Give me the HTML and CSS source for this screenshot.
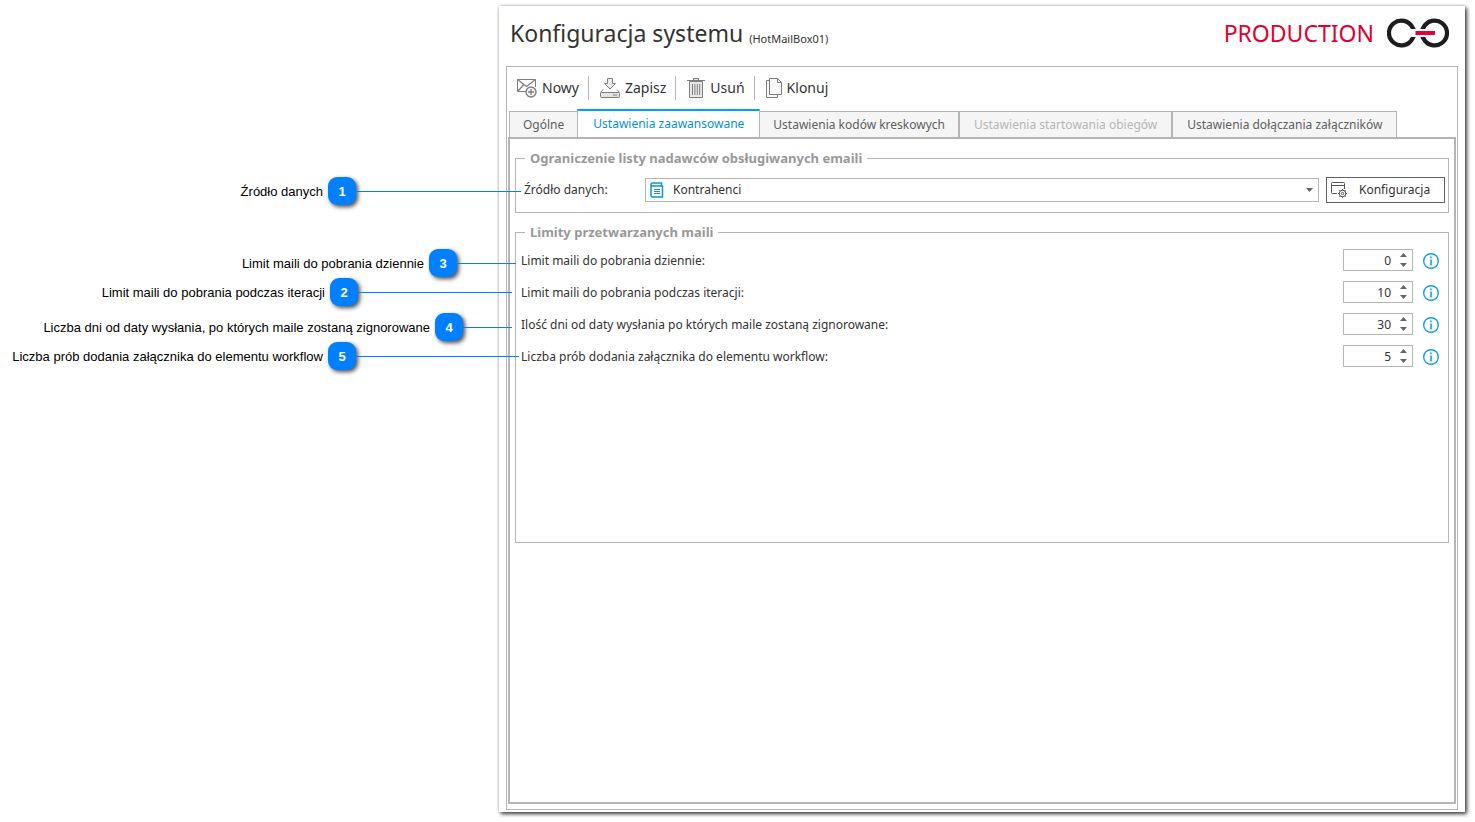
FILE: index.html
```html
<!DOCTYPE html>
<html lang="pl">
<head>
<meta charset="utf-8">
<title>Konfiguracja systemu</title>
<link rel="stylesheet" href="styles.css">
</head>
<body>
<main class="window">
  <header class="header">
    <h1 class="title">Konfiguracja systemu</h1>
    <span class="subtitle">(HotMailBox01)</span>
    <span class="environment">PRODUCTION</span>
    <svg class="logo" viewBox="0 0 62 30" aria-hidden="true">
      <g fill="none" stroke="#1d1d1f" stroke-width="4.200">
        <path d="M25.500 9.500A12.400 12.400 0 1 0 25.500 20.500"/>
        <path d="M36.500 9.500A12.400 12.400 0 1 1 36.500 20.500"/>
      </g>
      <path fill="#1d1d1f" d="M23 8.500h4.500l1.200 2.500H24zM24 19h4.700l-1.200 2.500H23zM34.500 8.500H39L38 11h-4.700zM33.300 19H38l1 2.500h-4.500z"/>
      <path fill="#e4003a" d="M28.500 13H48v4H28.500z"/>
    </svg>
  </header>
  <section class="frame">
    <div class="toolbar">
      <button class="tool" type="button">
        <svg class="tool-icon" viewBox="0 0 20 20" aria-hidden="true"><g fill="none" stroke="#7d7d7d"><path d="M9 13.500H.5v-12h18V9"/><path d="M.5 1.500l9 7 9-7M.5 13.500l6-6.500" stroke-width="1.300"/><circle cx="14" cy="14" r="5" fill="#f3f3f3" stroke-width="1.400"/><path d="M14 11v6M11 14h6" stroke-width="1.300"/></g></svg>
        Nowy
      </button>
      <button class="tool" type="button">
        <svg class="tool-icon" viewBox="0 0 20 20" aria-hidden="true"><g fill="#ececec" stroke="#7d7d7d"><path d="M7.500.5h5v5h3L10 11 4.500 5.500h3z"/><path d="M3 11.500L.5 14.500M17 11.500l2.500 3" fill="none"/><rect x=".5" y="14.500" width="19" height="5" rx="1" fill="#e2e2e2"/><path d="M13 17h4"/></g></svg>
        Zapisz
      </button>
      <button class="tool" type="button">
        <svg class="tool-icon tool-icon-bin" viewBox="0 0 18 20" aria-hidden="true"><g fill="#e9e9e9" stroke="#7d7d7d"><path d="M2.500 3.500h13v16h-13z"/><path d="M0 2.500h18M6.500 2.500v-2h5v2M5.500 6v11M7.900 6v11M10.300 6v11M12.700 6v11"/></g></svg>
        Usuń
      </button>
      <button class="tool" type="button">
        <svg class="tool-icon tool-icon-copy" viewBox="0 0 16 20" aria-hidden="true"><g fill="#f8f8f8" stroke="#7d7d7d"><path d="M.5 2.500h11v17H.5z"/><path d="M3.500.5h8l4 4v12h-12z"/><path d="M11.500.5v4h4" fill="none"/></g></svg>
        Klonuj
      </button>
    </div>
    <div class="tabs" role="tablist">
      <button class="tab" type="button" role="tab">Ogólne</button>
      <button class="tab tab-active" type="button" role="tab" aria-selected="true">Ustawienia zaawansowane</button>
      <button class="tab" type="button" role="tab">Ustawienia kodów kreskowych</button>
      <button class="tab tab-wide" type="button" role="tab" disabled>Ustawienia startowania obiegów</button>
      <button class="tab tab-wide" type="button" role="tab">Ustawienia dołączania załączników</button>
    </div>
    <div class="pane" role="tabpanel">
      <fieldset class="group">
        <legend class="legend">Ograniczenie listy nadawców obsługiwanych emaili</legend>
        <div class="source">
          <label class="source-label" for="source">Źródło danych:</label>
          <div class="picker">
            <svg class="picker-icon" viewBox="0 0 14 16" aria-hidden="true"><g fill="none" stroke="#0e95d8" stroke-width="1.500"><path d="M1 2.500V13.500Q1 15 2.500 15H12.500V4H2.500Q1 4 1 2.500Q1 1 2.500 1H11.500V4"/><path d="M4 7.500h6M4 9.500h6M4 11.500h6" stroke-width="1"/></g></svg>
            <select class="select" id="source"><option>Kontrahenci</option></select>
            <svg class="picker-arrow" viewBox="0 0 7 4" aria-hidden="true"><path fill="#666" d="M0 0h7L3.500 4z"/></svg>
          </div>
          <button class="configure" type="button">
            <svg class="configure-icon" viewBox="0 0 17 16" aria-hidden="true"><g fill="none" stroke="#555"><path d="M6 11.500H1.500q-1 0-1-1v-9q0-1 1-1h11q1 0 1 1V7M.5 3.500h13"/><circle cx="11.500" cy="11.500" r="3.300"/><circle cx="11.500" cy="11.500" r="1.200"/><path d="M11.500 7v1.500M11.500 14.500V16M7 11.500h1.500M14.500 11.500H16M8.300 8.300l1 1M13.700 13.700l1 1M14.700 8.300l-1 1M8.300 14.700l1-1"/></g></svg>
            <span>Konfiguracja</span>
          </button>
        </div>
      </fieldset>
      <fieldset class="group group-limits">
        <legend class="legend">Limity przetwarzanych maili</legend>
        <div class="limit">
          <label class="limit-label" for="daily">Limit maili do pobrania dziennie:</label>
          <div class="spinner"><input class="number" id="daily" type="number" value="0"><svg class="spin" viewBox="0 0 7 14" aria-hidden="true"><path fill="#666" d="M0 4h7L3.500 0zM0 10h7l-3.500 4z"/></svg></div>
          <button class="info" type="button" aria-label="Informacja"><svg class="info-icon" viewBox="0 0 16 16" aria-hidden="true"><circle cx="8" cy="8" r="7.300" fill="none" stroke="#119fe4" stroke-width="1.400"/><path fill="#119fe4" d="M7.200 3.500h1.600v1.700H7.200zM7.200 6.500h1.600v6H7.200z"/></svg></button>
        </div>
        <div class="limit">
          <label class="limit-label" for="iteration">Limit maili do pobrania podczas iteracji:</label>
          <div class="spinner"><input class="number" id="iteration" type="number" value="10"><svg class="spin" viewBox="0 0 7 14" aria-hidden="true"><path fill="#666" d="M0 4h7L3.500 0zM0 10h7l-3.500 4z"/></svg></div>
          <button class="info" type="button" aria-label="Informacja"><svg class="info-icon" viewBox="0 0 16 16" aria-hidden="true"><circle cx="8" cy="8" r="7.300" fill="none" stroke="#119fe4" stroke-width="1.400"/><path fill="#119fe4" d="M7.200 3.500h1.600v1.700H7.200zM7.200 6.500h1.600v6H7.200z"/></svg></button>
        </div>
        <div class="limit">
          <label class="limit-label" for="days">Ilość dni od daty wysłania po których maile zostaną zignorowane:</label>
          <div class="spinner"><input class="number" id="days" type="number" value="30"><svg class="spin" viewBox="0 0 7 14" aria-hidden="true"><path fill="#666" d="M0 4h7L3.500 0zM0 10h7l-3.500 4z"/></svg></div>
          <button class="info" type="button" aria-label="Informacja"><svg class="info-icon" viewBox="0 0 16 16" aria-hidden="true"><circle cx="8" cy="8" r="7.300" fill="none" stroke="#119fe4" stroke-width="1.400"/><path fill="#119fe4" d="M7.200 3.500h1.600v1.700H7.200zM7.200 6.500h1.600v6H7.200z"/></svg></button>
        </div>
        <div class="limit">
          <label class="limit-label" for="attempts">Liczba prób dodania załącznika do elementu workflow:</label>
          <div class="spinner"><input class="number" id="attempts" type="number" value="5"><svg class="spin" viewBox="0 0 7 14" aria-hidden="true"><path fill="#666" d="M0 4h7L3.500 0zM0 10h7l-3.500 4z"/></svg></div>
          <button class="info" type="button" aria-label="Informacja"><svg class="info-icon" viewBox="0 0 16 16" aria-hidden="true"><circle cx="8" cy="8" r="7.300" fill="none" stroke="#119fe4" stroke-width="1.400"/><path fill="#119fe4" d="M7.200 3.500h1.600v1.700H7.200zM7.200 6.500h1.600v6H7.200z"/></svg></button>
        </div>
      </fieldset>
    </div>
  </section>
</main>
<aside class="callouts">
  <div class="callout callout-source"><span class="callout-text">Źródło danych</span><span class="badge">1</span></div>
  <div class="callout callout-daily"><span class="callout-text">Limit maili do pobrania dziennie</span><span class="badge">3</span></div>
  <div class="callout callout-iteration"><span class="callout-text">Limit maili do pobrania podczas iteracji</span><span class="badge">2</span></div>
  <div class="callout callout-days"><span class="callout-text">Liczba dni od daty wysłania, po których maile zostaną zignorowane</span><span class="badge">4</span></div>
  <div class="callout callout-attempts"><span class="callout-text">Liczba prób dodania załącznika do elementu workflow</span><span class="badge">5</span></div>
</aside>
</body>
</html>
```
FILE: styles.css
```css
* { box-sizing: border-box; }

body {
  margin: 0;
  min-height: 100vh;
  padding: 6px 10px 10px 499px;
  display: flex;
  background: #fff;
  color: #333;
  font: 12px/16px "Noto Sans", sans-serif;
}

button, input, select { font: inherit; color: inherit; }

.window {
  flex: 1;
  display: flex;
  flex-direction: column;
  padding: 0 7px 2px;
  background: #fff;
  box-shadow: 2px 2px 4px rgba(0, 0, 0, .75), 0 0 3px rgba(0, 0, 0, .25);
}

.header {
  display: flex;
  align-items: center;
  height: 60px;
  padding: 0 9px 6px 4px;
}
.title { margin: 0 6px 0 0; font-size: 23px; line-height: 32px; font-weight: 400; }
.subtitle { padding-top: 12px; font-size: 11px; }
.environment { margin: 0 13px 0 auto; font-size: 23px; line-height: 32px; color: #e0002f; }
.logo { width: 62px; height: 30px; }

.frame {
  flex: 1;
  display: flex;
  flex-direction: column;
  padding: 0 1px 5px;
  border: 1px solid #b5b5b5;
}

.toolbar { display: flex; align-items: center; height: 42px; padding-left: 9px; }
.tool {
  display: flex;
  align-items: center;
  gap: 5px;
  height: 24px;
  padding: 0;
  border: 0;
  background: none;
  font-size: 14px;
}
.tool + .tool { margin-left: 9px; padding-left: 11px; border-left: 1px solid #b5b5b5; }
.tool-icon { width: 20px; height: 20px; }
.tool-icon-bin { width: 18px; }
.tool-icon-copy { width: 16px; }

.tabs { display: flex; align-items: flex-end; height: 28px; padding-left: 1px; }
.tab {
  height: 26px;
  padding: 0 13px;
  border: 1px solid #b5b5b5;
  border-bottom: 0;
  background: #f5f5f5;
  color: #5f5f5f;
}
.tab:disabled { color: #b5b5b5; }
.tab-wide { padding: 0 14px; }
.tab-active {
  height: 28px;
  margin: 0 -1px;
  padding: 0 15px;
  border-top: 2px solid #00a2f2;
  background: #fff;
  color: #078fd8;
}

.pane { flex: 1; padding: 11px 5px; border: 2px solid #b5b5b5; }
.group { min-width: 0; margin: 0 0 11px; padding: 0 3px 9px 5px; border: 1px solid #b5b5b5; }
.legend { margin-left: 4px; padding: 0 5px; font-size: 13px; font-weight: 700; color: #999; }
.group-limits { height: 319px; }

.source { display: flex; align-items: center; padding: 11px 0 0 3px; }
.source-label { width: 121px; }
.picker { position: relative; flex: 1; margin-right: 7px; }
.picker-icon { position: absolute; left: 5px; top: 4px; width: 14px; height: 16px; }
.picker-arrow { position: absolute; right: 6px; top: 10px; width: 7px; height: 4px; }
.select {
  display: block;
  width: 100%;
  height: 24px;
  padding: 0 20px 0 27px;
  border: 1px solid #b5b5b5;
  border-radius: 0;
  background: #fff;
  appearance: none;
}
.configure {
  display: flex;
  align-items: center;
  gap: 11px;
  width: 119px;
  height: 26px;
  padding: 0 4px;
  border: 1px solid #606060;
  background: #fff;
}
.configure-icon { width: 17px; height: 16px; }

.limit { display: flex; align-items: center; height: 24px; margin-bottom: 8px; }
.legend + .limit { margin-top: 9px; }
.limit-label { flex: 1; }
.spinner { position: relative; align-self: flex-start; }
.number {
  display: block;
  width: 70px;
  height: 22px;
  padding: 0 21px 0 4px;
  border: 1px solid #b5b5b5;
  text-align: right;
  appearance: textfield;
}
.number::-webkit-inner-spin-button { appearance: none; margin: 0; }
.spin { position: absolute; right: 6px; top: 4px; width: 7px; height: 14px; }
.info { display: flex; margin: 0 6px 0 10px; padding: 0; border: 0; background: none; }
.info-icon { width: 16px; height: 16px; }

.callout {
  position: absolute;
  left: 0;
  display: flex;
  align-items: center;
  gap: 5px;
  color: #000;
  font: 13px/16px "Liberation Sans", Arial, sans-serif;
}
.callout::after { content: ""; flex: 1; height: 1px; margin-left: -5px; background: #0080ff; }
.callout-text { padding-top: 1px; text-align: right; white-space: nowrap; }
.badge {
  width: 28px;
  height: 28px;
  padding-top: 1px;
  border-radius: 9px;
  background: #0080ff;
  box-shadow: 2px 2px 4px rgba(0, 0, 0, .7);
  color: #fff;
  font-weight: 700;
  line-height: 28px;
  text-align: center;
}
.callout-source { top: 177px; width: 521px; }
.callout-daily { top: 249px; width: 516px; }
.callout-iteration { top: 278px; width: 512px; }
.callout-days { top: 313px; width: 512px; }
.callout-attempts { top: 342px; width: 519px; }
.callout-source .callout-text, .callout-attempts .callout-text { width: 323px; }
.callout-daily .callout-text { width: 424px; }
.callout-iteration .callout-text { width: 325px; }
.callout-days .callout-text { width: 430px; }
```
